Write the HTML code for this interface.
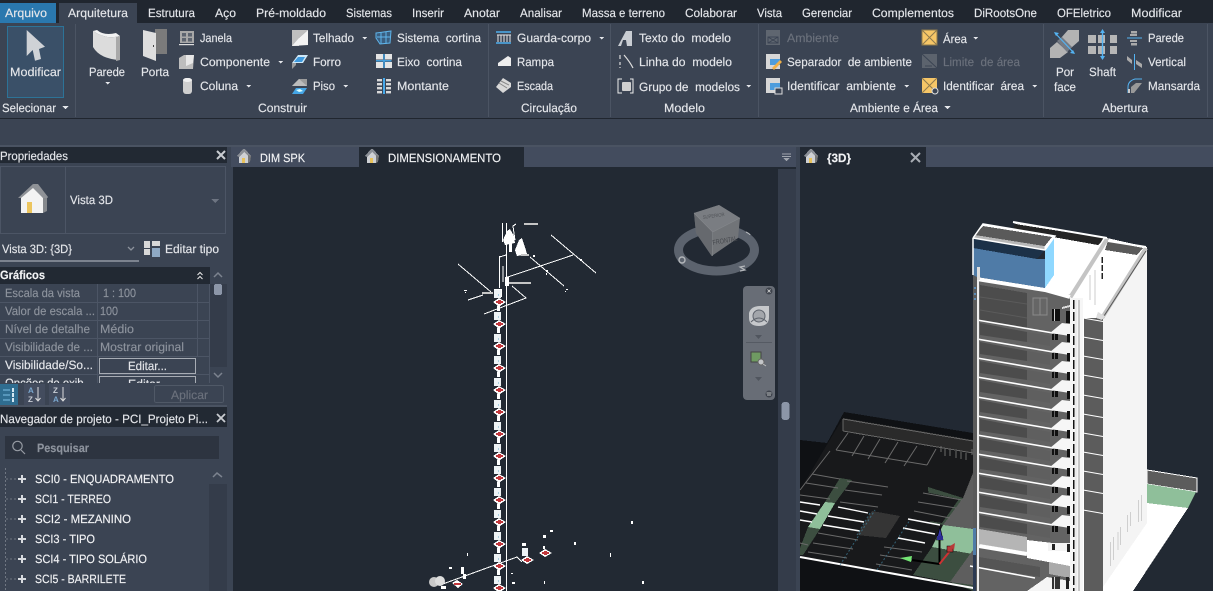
<!DOCTYPE html>
<html><head><meta charset="utf-8"><title>Revit</title>
<style>
html,body{margin:0;padding:0;background:#3b4453;width:1213px;height:591px;overflow:hidden}
svg{display:block}
text{font-family:"Liberation Sans",sans-serif;font-size:12px;fill:#e4e6ea;white-space:pre;stroke:#e4e6ea;stroke-width:.15px}
.g{fill:#6b717c;stroke:#6b717c}.p{fill:#8d939d;stroke:#8d939d}.w{fill:#f2f3f5;stroke:#f2f3f5}.b{font-weight:bold}
</style></head><body>
<svg width="1213" height="591" viewBox="0 0 1213 591" xmlns="http://www.w3.org/2000/svg" shape-rendering="crispEdges" text-rendering="geometricPrecision">
<defs>
<g id="fl">
<polygon points="980,3 1027,12 1027,22 980,15" fill="#4c4c4c"/>
<polygon points="1027,12 1050,16 1050,26 1027,22" fill="#5f5f5f"/>
<line x1="977" y1="0" x2="1053" y2="13" stroke="#fff" stroke-width="1.6"/>
<polygon points="1050,13 1062,3 1070,4 1070,16" fill="#f6f6f6"/>
<rect x="1052" y="14" width="2" height="6" fill="#111"/><rect x="1055" y="14" width="3" height="6" fill="#111"/><rect x="1067" y="14" width="3" height="8" fill="#111"/>
<line x1="1083" y1="-2" x2="1103" y2="1.5" stroke="#fff" stroke-width="1"/>
</g>
<g id="u">
<rect x="494" y="-12" width="7" height="8" fill="#eef3f6"/><rect x="498" y="-8" width="1" height="2" fill="#a9cfe0"/>
<polygon points="493,0 499,-4 506,0 500,4 498,4" fill="#fff"/>
<rect x="496" y="-1" width="7" height="2" fill="#c0373c"/><rect x="498" y="-2" width="3" height="4" fill="#c0373c"/>
<rect x="497" y="4" width="3" height="5" fill="#fff"/>
</g>
<g id="h"><polygon points="0,7 6,0 8,0 14,7 12,8 7,3 2,8" fill="#8b8f96"/><polygon points="2,8 7,3 11,7 11,14 2,14" fill="#cfd1d4"/><polygon points="11,6 14,7 13,13 11,14" fill="#777"/><rect x="5" y="9" width="3" height="5" fill="#e8c25c"/></g>
<g id="t"><polygon points="0,0 7,0 3.5,3"/></g>
<g id="tw"><polygon points="0,0 5,0 2.5,2.5"/></g>
</defs>

<rect width="1213" height="591" fill="#3b4453"/>
<!-- top tabs -->
<rect width="1213" height="23" fill="#20262f"/>
<rect x="0" y="3" width="56" height="20" fill="#2a78ae"/>
<rect x="59" y="3" width="78" height="20" fill="#3b4453"/>
<text x="5" y="17" textLength="42" lengthAdjust="spacingAndGlyphs">Arquivo</text>
<text x="68" y="17" textLength="60" lengthAdjust="spacingAndGlyphs">Arquitetura</text>
<text x="148" y="17" textLength="47" lengthAdjust="spacingAndGlyphs">Estrutura</text>
<text x="215" y="17" textLength="21" lengthAdjust="spacingAndGlyphs">Aço</text>
<text x="256" y="17" textLength="70" lengthAdjust="spacingAndGlyphs">Pré-moldado</text>
<text x="346" y="17" textLength="46" lengthAdjust="spacingAndGlyphs">Sistemas</text>
<text x="412" y="17" textLength="32" lengthAdjust="spacingAndGlyphs">Inserir</text>
<text x="464" y="17" textLength="36" lengthAdjust="spacingAndGlyphs">Anotar</text>
<text x="520" y="17" textLength="42" lengthAdjust="spacingAndGlyphs">Analisar</text>
<text x="582" y="17" textLength="83" lengthAdjust="spacingAndGlyphs">Massa e terreno</text>
<text x="685" y="17" textLength="52" lengthAdjust="spacingAndGlyphs">Colaborar</text>
<text x="757" y="17" textLength="25" lengthAdjust="spacingAndGlyphs">Vista</text>
<text x="802" y="17" textLength="50" lengthAdjust="spacingAndGlyphs">Gerenciar</text>
<text x="872" y="17" textLength="82" lengthAdjust="spacingAndGlyphs">Complementos</text>
<text x="974" y="17" textLength="63" lengthAdjust="spacingAndGlyphs">DiRootsOne</text>
<text x="1057" y="17" textLength="54" lengthAdjust="spacingAndGlyphs">OFEletrico</text>
<text x="1131" y="17" textLength="51" lengthAdjust="spacingAndGlyphs">Modificar</text>

<!-- ribbon -->
<rect x="0" y="118" width="1213" height="1" fill="#20262f"/>
<g fill="#4b5463">
<rect x="75" y="24" width="1" height="93"/><rect x="488" y="24" width="1" height="93"/><rect x="610" y="24" width="1" height="93"/><rect x="758" y="24" width="1" height="93"/><rect x="1043" y="24" width="1" height="93"/><rect x="1207" y="24" width="1" height="93"/>
</g>
<rect x="7.5" y="26.5" width="56" height="71" fill="#3a5068" stroke="#2d7397"/>
<g shape-rendering="auto">
<polygon points="26.7,30 45,46.7 39,49 41,59 35,60.7 32.7,50 26.7,56" fill="#cfd2d6"/>
<!-- parede -->
<path d="M93 31Q106 40 120 36V60Q100 59 93 47Z" fill="#dcdcdc"/><path d="M93 31Q106 40 120 36L116 33Q104 36 97 30Z" fill="#f2f2f2"/><path d="M116 37 120 36V60L116 61Z" fill="#a9a9a9"/>
<!-- porta -->
<rect x="155" y="29" width="12" height="25" fill="#7b7b7b"/><polygon points="143,30 156,33 156,61 143,56" fill="#dedede"/><rect x="153" y="45" width="1" height="2" fill="#444"/>
<!-- janela -->
<rect x="180" y="31" width="14" height="12" fill="#a8a8a8"/><g fill="#5e6570"><rect x="182" y="33" width="4" height="3.5"/><rect x="188" y="33" width="4" height="3.5"/><rect x="182" y="38" width="4" height="3.5"/><rect x="188" y="38" width="4" height="3.5"/></g><rect x="179" y="44" width="15" height="1.2" fill="#ddd"/>
<!-- componente -->
<polygon points="179,58 184,55 194,55 193,69 179,69" fill="#bdbdbd"/><polygon points="186,55 194,55 193,63 186,66" fill="#e7e7e7"/>
<!-- coluna -->
<rect x="183" y="78" width="9" height="16" rx="3" fill="#cfcfcf"/><ellipse cx="187.5" cy="80" rx="4.5" ry="2" fill="#f0f0f0"/>
<!-- telhado -->
<polygon points="292,30 308,30 299,38 299,46 292,46" fill="#bfbfbf"/><polygon points="308,30 308,45 292,46 299,38" fill="#f3f3f3"/>
<!-- forro -->
<polygon points="292,63 298,55 308,55 303,63" fill="#cfe8f7"/><polygon points="294,62 298,57 305,57 302,62" fill="#3f9ade"/><polygon points="292,63 296,63 296,65 292,69" fill="#999"/>
<!-- piso -->
<polygon points="292,86 299,79 307,79 307,86" fill="#9b9b9b"/><polygon points="292,86 307,86 299,79" fill="#bcbcbc"/><polygon points="292,94 296,88 307,88 303,94" fill="#45a6e6"/><polygon points="296,90 300,89 303,91 299,92" fill="#dff"/>
<!-- sistema cortina -->
<polygon points="376,33 391,31 390,43 380,44 376,38" fill="#3a5e80" stroke="#5fb4ea" stroke-width="1"/><path d="M381 32V44M386 32V44M377 37H390" stroke="#5fb4ea" fill="none"/>
<!-- eixo -->
<g fill="#e4e4e4"><rect x="376" y="54" width="7" height="5.5"/><rect x="385" y="54" width="7" height="5.5"/><rect x="376" y="62" width="7" height="6"/><rect x="385" y="62" width="7" height="6"/></g><path d="M376 60.8H391.5M384 54V68" stroke="#45a8ea" stroke-width="1.4"/>
<!-- montante -->
<g fill="#d8d8d8"><rect x="377" y="79" width="5" height="2.4"/><rect x="377" y="83" width="5" height="2.4"/><rect x="377" y="87" width="5" height="2.4"/><rect x="377" y="91" width="5" height="2.4"/><rect x="386" y="79" width="5" height="2.4"/><rect x="386" y="83" width="5" height="2.4"/><rect x="386" y="87" width="5" height="2.4"/><rect x="386" y="91" width="5" height="2.4"/></g><path d="M384 78V94" stroke="#45a8ea" stroke-width="2"/>
<!-- guarda-corpo -->
<path d="M496 32H511M496 43H511" stroke="#4eaeee" stroke-width="1.6" fill="none"/><path d="M497 35H511M498 35V42M501 35V42M504 35V42M507 35V42M510 35V42" stroke="#e8e8e8" fill="none"/>
<!-- rampa -->
<polygon points="498,63 508,56 511,58 511,66 498,66" fill="#ededed"/>
<!-- escada -->
<polygon points="496,87 503,78 511,83 511,87 503,93" fill="#d8d8d8"/><path d="M499 83 507 88M501 81 509 85" stroke="#888"/>
<!-- texto -->
<path d="M618 46 626 31H632V46H627L626 40H623L621 46Z" fill="#c9cdd3"/>
<!-- linha -->
<path d="M620 55V59M620 62V65M620 67V68M624 55Q630 62 633 68" stroke="#ddd" fill="none" stroke-width="1.2"/>
<!-- grupo -->
<path d="M622 79H618V93H622M630 79H633V93H630" stroke="#eee" fill="none"/><rect x="622" y="82" width="9" height="9" rx="1" fill="#d0d0d0"/>
<!-- ambiente icons -->
<rect x="766" y="30" width="14" height="15" fill="#5f6670"/><path d="M768 37H778V43H768ZM768 37 778 43M778 37 768 43" stroke="#3b4453" fill="none"/>
<rect x="766" y="54" width="14" height="15" fill="#d7d7d7"/><rect x="770" y="59" width="10" height="6" fill="#4d9cdc"/><polygon points="772,68 780,60 782,62 774,70" fill="#f0b048"/>
<rect x="766" y="78" width="14" height="15" fill="#d7d7d7"/><rect x="770" y="83" width="10" height="7" fill="#4d9cdc"/><rect x="775" y="88" width="7" height="6" fill="#3b4453" stroke="#ddd"/>
<!-- area -->
<rect x="922" y="30" width="15" height="15" fill="#f6c667"/><path d="M922 30 937 45M937 30 922 45" stroke="#8e7a4e"/><path d="M922 30H937V45H922Z" stroke="#8e7a4e" fill="none"/>
<rect x="922" y="54" width="15" height="14" fill="#5c636d"/><path d="M922 54 937 68M925 66H932" stroke="#3b4453"/>
<rect x="922" y="78" width="15" height="15" fill="#f6c667"/><path d="M922 78 937 93M937 78 922 93" stroke="#8e7a4e"/><circle cx="935" cy="91" r="3" fill="#3b4453" stroke="#ddd"/>
<!-- por face -->
<polygon points="1068,30 1079,30 1079,41 1071,48 1061,38" fill="#b3b3b3"/><polygon points="1050,48 1057,42 1068,52 1060,58 1050,58" fill="#b3b3b3"/><polygon points="1057,41 1062,37 1072,47 1067,52" fill="#757b85"/>
<path d="M1055 33 1074 53" stroke="#54b3f2" stroke-width="1.2"/><path d="M1054 32 1059 33 1056 36ZM1075 54 1070 53 1073 50Z" fill="#54b3f2"/>
<!-- shaft -->
<g fill="#b6b6b6"><rect x="1088" y="35" width="8" height="8"/><rect x="1098" y="35" width="7" height="8"/><rect x="1110" y="35" width="7" height="8"/><rect x="1088" y="46" width="8" height="8"/><rect x="1098" y="46" width="7" height="8"/><rect x="1110" y="46" width="7" height="8"/></g>
<path d="M1102.5 31V59" stroke="#54b3f2" stroke-width="1.4"/><path d="M1102.5 29 1105 33H1100ZM1102.5 60 1100 56H1105Z" fill="#54b3f2"/>
<!-- abertura -->
<g fill="#aaa"><rect x="1131" y="31" width="6" height="2.5"/><rect x="1130" y="34" width="7" height="2"/><rect x="1130" y="40" width="7" height="2"/><rect x="1131" y="43" width="6" height="2.5"/></g><path d="M1127 38H1142" stroke="#54b3f2"/>
<path d="M1127 56 1132 60V64L1127 60ZM1136 60 1142 64V68L1136 64Z" fill="#aaa"/><path d="M1134.500 54V70" stroke="#54b3f2"/>
<path d="M1128 93V87Q1128 81 1135 79H1142" stroke="#54b3f2" fill="none"/><polygon points="1131,93 1131,87 1136,83 1142,83 1134,93" fill="#999"/><rect x="1128" y="89" width="2" height="4" fill="#ccc"/>
</g>
<text x="10" y="76" textLength="51" lengthAdjust="spacingAndGlyphs">Modificar</text>
<text x="2" y="112" textLength="54" lengthAdjust="spacingAndGlyphs">Selecionar</text><use href="#t" x="62" y="106" fill="#e4e6ea"/>
<text x="89" y="76" textLength="36" lengthAdjust="spacingAndGlyphs">Parede</text><use href="#tw" x="105" y="82" fill="#e4e6ea"/>
<text x="141" y="76" textLength="28" lengthAdjust="spacingAndGlyphs">Porta</text>
<text x="200" y="42" textLength="32" lengthAdjust="spacingAndGlyphs">Janela</text>
<text x="200" y="66" textLength="70" lengthAdjust="spacingAndGlyphs">Componente</text><use href="#tw" x="278" y="61" fill="#e4e6ea"/>
<text x="200" y="90" textLength="38" lengthAdjust="spacingAndGlyphs">Coluna</text><use href="#tw" x="246" y="85" fill="#e4e6ea"/>
<text x="313" y="42" textLength="41" lengthAdjust="spacingAndGlyphs">Telhado</text><use href="#tw" x="362" y="37" fill="#e4e6ea"/>
<text x="313" y="66" textLength="28" lengthAdjust="spacingAndGlyphs">Forro</text>
<text x="313" y="90" textLength="22" lengthAdjust="spacingAndGlyphs">Piso</text><use href="#tw" x="343" y="85" fill="#e4e6ea"/>
<text x="397" y="42" textLength="84" lengthAdjust="spacingAndGlyphs">Sistema  cortina</text>
<text x="397" y="66" textLength="65" lengthAdjust="spacingAndGlyphs">Eixo  cortina</text>
<text x="397" y="90" textLength="52" lengthAdjust="spacingAndGlyphs">Montante</text>
<text x="258" y="112" textLength="49" lengthAdjust="spacingAndGlyphs">Construir</text>
<text x="517" y="42" textLength="74" lengthAdjust="spacingAndGlyphs">Guarda-corpo</text><use href="#tw" x="599" y="37" fill="#e4e6ea"/>
<text x="517" y="66" textLength="37" lengthAdjust="spacingAndGlyphs">Rampa</text>
<text x="517" y="90" textLength="36" lengthAdjust="spacingAndGlyphs">Escada</text>
<text x="521" y="112" textLength="56" lengthAdjust="spacingAndGlyphs">Circulação</text>
<text x="639" y="42" textLength="92" lengthAdjust="spacingAndGlyphs">Texto do  modelo</text>
<text x="639" y="66" textLength="93" lengthAdjust="spacingAndGlyphs">Linha do  modelo</text>
<text x="639" y="91" textLength="101" lengthAdjust="spacingAndGlyphs">Grupo de  modelos</text><use href="#tw" x="746" y="85" fill="#e4e6ea"/>
<text x="664" y="112" textLength="41" lengthAdjust="spacingAndGlyphs">Modelo</text>
<text x="787" y="42" textLength="52" lengthAdjust="spacingAndGlyphs" class="g">Ambiente</text>
<text x="787" y="66" textLength="125" lengthAdjust="spacingAndGlyphs">Separador  de ambiente</text>
<text x="787" y="90" textLength="109" lengthAdjust="spacingAndGlyphs">Identificar  ambiente</text><use href="#tw" x="904" y="85" fill="#e4e6ea"/>
<text x="943" y="43" textLength="24" lengthAdjust="spacingAndGlyphs">Área</text><use href="#tw" x="973" y="37" fill="#e4e6ea"/>
<text x="943" y="66" textLength="77" lengthAdjust="spacingAndGlyphs" class="g">Limite  de área</text>
<text x="943" y="90" textLength="81" lengthAdjust="spacingAndGlyphs">Identificar  área</text><use href="#tw" x="1032" y="85" fill="#e4e6ea"/>
<text x="850" y="112" textLength="88" lengthAdjust="spacingAndGlyphs">Ambiente e Área</text><use href="#t" x="944" y="106" fill="#e4e6ea"/>
<text x="1056" y="76" textLength="18" lengthAdjust="spacingAndGlyphs">Por</text>
<text x="1054" y="91" textLength="22" lengthAdjust="spacingAndGlyphs">face</text>
<text x="1089" y="76" textLength="27" lengthAdjust="spacingAndGlyphs">Shaft</text>
<text x="1148" y="42" textLength="36" lengthAdjust="spacingAndGlyphs">Parede</text>
<text x="1148" y="66" textLength="38" lengthAdjust="spacingAndGlyphs">Vertical</text>
<text x="1148" y="90" textLength="52" lengthAdjust="spacingAndGlyphs">Mansarda</text>
<text x="1102" y="112" textLength="46" lengthAdjust="spacingAndGlyphs">Abertura</text>

<!-- strip under ribbon -->
<rect x="0" y="145" width="1213" height="2" fill="#4a5362"/>

<!-- left view -->
<rect x="231" y="147" width="565" height="20" fill="#434c5e"/>
<rect x="359" y="147" width="165" height="20" fill="#222933"/>
<rect x="233" y="167" width="563" height="424" fill="#222933"/>
<rect x="778" y="169" width="18" height="422" fill="#343c4a"/>
<use href="#h" x="237" y="149"/><use href="#h" x="365" y="149"/>
<text x="260" y="162" textLength="45" lengthAdjust="spacingAndGlyphs" class="w">DIM SPK</text>
<text x="388" y="162" textLength="113" lengthAdjust="spacingAndGlyphs" class="w">DIMENSIONAMENTO</text>
<path d="M782 154H791M782 156.500H791" stroke="#a0a5ae"/><polygon points="783,158 790,158 786.500,161" fill="#a0a5ae"/>
<rect x="781.500" y="402" width="8" height="18" rx="3" fill="#8c96a8"/>

<!-- right view -->
<rect x="796" y="147" width="4" height="444" fill="#3b4453"/>
<rect x="800" y="147" width="126" height="20" fill="#222933"/>
<rect x="926" y="147" width="287" height="20" fill="#434c5e"/>
<rect x="800" y="167" width="413" height="424" fill="#222933"/>
<use href="#h" x="804" y="149"/>
<text x="827" y="162" textLength="24" lengthAdjust="spacingAndGlyphs" class="w b">{3D}</text>
<path d="M911 153 920 162M920 153 911 162" stroke="#a9adb4" stroke-width="2" shape-rendering="auto"/>

<!-- drawing left -->
<g shape-rendering="crispEdges" stroke="#fff" fill="none">
<path d="M506.500 223V591"/>
<path d="M551 235 596 273M530 257 564 286M458 264 491 292M505 278 573 255M468 300 483 295M484 314 526 298 512 286M502.500 223V242M499.500 256V288M499.500 257 506 255M516 224 513 226 515 240M503 266V282M440 585 517 557 522 562"/>
</g>
<g fill="#fff">
<polygon points="503,240 507,231 510,229 514,236 515,243 505,245"/>
<polygon points="515,250 519,240 522,238 525,247 527,254 517,256"/>
<rect x="509" y="243" width="3" height="9"/><rect x="505" y="277" width="4" height="9"/>
<rect x="494" y="289" width="8" height="8"/>
<rect x="464" y="290" width="3" height="1"/><rect x="465" y="292" width="1" height="1"/><rect x="566" y="289" width="2" height="1"/><rect x="565" y="291" width="1" height="1"/>
<rect x="533" y="255" width="2" height="2"/><rect x="546" y="270" width="2" height="2"/><rect x="580" y="259" width="2" height="2"/><rect x="546" y="273" width="1" height="2"/>
</g>
<g fill="#c5c5c5"><rect x="524" y="223" width="14" height="2"/><rect x="509" y="282" width="22" height="2"/><rect x="482" y="292" width="11" height="2"/><rect x="521" y="254" width="8" height="2"/></g>
<use href="#u" x="0" y="302"/><use href="#u" x="0" y="324"/><use href="#u" x="0" y="346"/><use href="#u" x="0" y="368"/><use href="#u" x="0" y="390"/><use href="#u" x="0" y="412"/><use href="#u" x="0" y="434"/><use href="#u" x="0" y="456"/><use href="#u" x="0" y="478"/><use href="#u" x="0" y="500"/><use href="#u" x="0" y="522"/><use href="#u" x="0" y="544"/><use href="#u" x="0" y="566"/><use href="#u" x="0" y="588"/>
<!-- lower scatter -->
<rect x="522" y="548" width="6" height="8" fill="#eef3f6"/><rect x="522" y="543" width="4" height="3" fill="#fff"/>
<polygon points="521,560 527,556 534,560 527,564" fill="#fff"/><rect x="524" y="559" width="7" height="2" fill="#c0373c"/><rect x="526" y="558" width="3" height="4" fill="#c0373c"/>
<polygon points="539,553 545,549 552,553 545,557" fill="#fff"/><rect x="542" y="552" width="7" height="2" fill="#c0373c"/><rect x="544" y="551" width="3" height="4" fill="#c0373c"/><rect x="543" y="546" width="2" height="3" fill="#fff"/>
<polygon points="452,583 457,580 463,584 458,588" fill="#fff"/><rect x="454" y="583" width="7" height="2" fill="#c0373c"/>
<g fill="#fff"><rect x="543" y="535" width="3" height="3"/><rect x="550" y="530" width="3" height="2"/><rect x="574" y="542" width="2" height="3"/><rect x="610" y="553" width="1" height="4"/><rect x="631" y="521" width="2" height="3"/><rect x="467" y="553" width="1" height="3"/><rect x="449" y="567" width="3" height="2"/><rect x="511" y="573" width="2" height="1"/><rect x="512" y="582" width="3" height="2"/><rect x="544" y="581" width="1" height="3"/><rect x="642" y="581" width="2" height="3"/><rect x="461" y="567" width="3" height="7"/><rect x="463" y="574" width="3" height="5"/><rect x="441" y="586" width="5" height="3"/></g>
<circle cx="434" cy="582" r="5" fill="#c9c9c9" shape-rendering="auto"/><circle cx="440" cy="581" r="5" fill="#ddd" shape-rendering="auto"/>

<!-- viewcube -->
<g shape-rendering="auto">
<ellipse cx="716.500" cy="250" rx="38" ry="21" fill="none" stroke="#5c636e" stroke-width="9"/>
<polygon points="719,205 694,213 696,233 711.700,256 738,238 740,218" fill="#717478"/>
<polygon points="694,213 719,205 740,218 712.700,232" fill="#7a7d82"/>
<polygon points="694,213 712.700,232 711.700,256 696,233" fill="#66696e"/>
<path d="M694 213 712.700 232 740 218M712.700 232V256" stroke="#85888c" fill="none" stroke-width=".6"/>
<text x="713" y="245" style="font-size:7px;fill:#44474c;stroke:none" textLength="25" lengthAdjust="spacingAndGlyphs" transform="rotate(-10 713 245)">FRONTAL</text>
<text x="703" y="219" style="font-size:5px;fill:#505358;stroke:none" textLength="22" lengthAdjust="spacingAndGlyphs" transform="rotate(-8 703 219)">SUPERIOR</text>
<circle cx="682" cy="260" r="3" fill="none" stroke="#b4b7bb" stroke-width="1.4"/>
<path d="M745 266 740 267 745 270 740 271M746 232Q750 234 750 235" stroke="#b4b7bb" fill="none" stroke-width="1.2"/>
<!-- navbar -->
<rect x="743" y="286" width="32" height="114" rx="4" fill="#686d76"/>
<circle cx="769" cy="291" r="3.500" fill="#3f444d"/><path d="M767.500 289.500 770.500 292.500M770.500 289.500 767.500 292.500" stroke="#ddd" stroke-width=".8"/>
<path d="M749 313Q751 306 760 306H769V317Q769 326 759 326 749 326 749 318Z" fill="#c6c8cb"/><circle cx="759" cy="316" r="6" fill="#a3a6ab" stroke="#5e636c"/><path d="M751 322Q759 314 767 322" stroke="#5e636c" fill="none"/>
<polygon points="755,335 762,335 758.500,339" fill="#50555e"/>
<rect x="746" y="342" width="26" height="1" fill="#555a63"/>
<rect x="751" y="352" width="10" height="10" fill="#6f9a62" stroke="#444"/>
<circle cx="761" cy="362" r="3" fill="#c4c6c9" stroke="#666"/><path d="M763 364 766 366" stroke="#bbb"/>
<polygon points="755,377 762,377 758.500,381" fill="#50555e"/>
<circle cx="769" cy="394" r="3.500" fill="#3f444d"/><path d="M766.500 393H771.500M767 395H771" stroke="#ddd" stroke-width=".8"/>
</g>

<!-- PARKING -->
<polygon points="800,440 827,443 844,412 973,433 973,591 800,591" fill="#0f1114"/>
<polygon points="843,418 973,440 973,591 990,591 800,557 800,490" fill="#18191b"/>
<polygon points="843,418 973,440 973,453 843,431" fill="#2a2a2a"/>
<path d="M843 419 973 441M843 431 973 453M843 419V431" stroke="#666" fill="none"/>
<polygon points="840,478 852,480 835,503 825,502" fill="#3c4e40"/>
<polygon points="825,502 835,503 820,529 808,527" fill="#8fbf9a"/>
<polygon points="808,527 820,529 803,555 800,555 800,548" fill="#3c4e40"/>
<polygon points="872,511 900,516 886,538 857,535" fill="#353535"/>
<polygon points="928,487 963,498 943,525 973,530 973,591 950,582 913,575 932,547" fill="#3c4e40"/>
<polygon points="925,492 959,499 942,523 910,518" fill="#18191b"/>
<polygon points="907,518 943,525 932,547 893,538" fill="#18191b"/>
<polygon points="883,547 927,545 913,575 875,568" fill="#18191b"/>
<polygon points="943,525 973,529 973,554 932,547" fill="#8fbf9a"/>
<polygon points="943,525 963,498 973,473 973,529" fill="#5e5e5e"/>
<polygon points="950,582 973,550 973,585" fill="#5e5e5e"/>
<g stroke="#6a6a6a" fill="none" shape-rendering="auto">
<path d="M848 433 836 450M864 436 852 456M880 439 868 459M898 442 885 463M917 446 904 466M936 449 927 465M836 450 927 465"/>
<path d="M830 451 800 490"/>
<path d="M812 474 840 479M847 481 888 487M806 483 838 488M845 490 882 495M800 495 830 499M840 502 878 507M923 493 962 500M918 502 956 508M914 511 950 518"/>
<path d="M818 533 858 540M813 543 853 549M808 552 847 558M800 543 808 545M884 547 922 552M880 555 918 561M876 564 912 570"/>
<path d="M972 449 972 455M941 446V452M945 448V456M950 449V456M956 451V458M961 452V459M966 453V460"/>
</g>
<g stroke="#fff" fill="none" stroke-width="1.400" shape-rendering="auto">
<path d="M800 502 820 505M800 511 817 514M800 520 812 522M838 507 868 513M828 516 864 522M823 525 860 531M908 519 940 525M903 528 935 534M898 538 925 543"/>
<path d="M800 557 990 591" stroke-width="2"/>
</g>
<path d="M870 513 857 535M840 565 875 510M877 570 910 520" stroke="#3f7f9a" stroke-dasharray="2 2" fill="none" shape-rendering="auto" opacity=".7"/>
<!-- gizmo -->
<g shape-rendering="auto">
<path d="M939.500 564V540" stroke="#000" stroke-width="2"/>
<polygon points="940,527 943,540 943,540 936.500,540" fill="#3434a8" stroke="#000" stroke-width=".6"/><rect x="937" y="536" width="6" height="4" fill="#2c2c90"/>
<path d="M939.500 564 912 560" stroke="#000" stroke-width="2"/>
<polygon points="900,558 912,556 911,562" fill="#74e674"/>
<path d="M939.500 564 950 551" stroke="#c33" stroke-width="2"/>
<rect x="947" y="546" width="6" height="6" fill="#b83a3a" stroke="#000" stroke-width=".5"/><polygon points="950,546 955,543 954,550" fill="#b83a3a"/>
</g>

<!-- GROUND right -->
<polygon points="1147,470 1197,478 1197,492 1147,484" fill="#5c5c5c" stroke="#fff"/>
<polygon points="1147,484 1196,492 1188,508 1147,503" fill="#8fbf9a"/>
<polygon points="1147,503 1188,508 1133,591 1100,591" fill="#fff"/>

<!-- BUILDING -->
<polygon points="1013,223 1107,238 1147,247 1147,251 1103,318 1070,320 1045,288 1054,235" fill="#fff"/>
<polygon points="1147,247 1147,523 1103,587 1103,318" fill="#f4f4f4"/>
<polygon points="1015,224 1105,238 1098,245 1013,230" fill="#242424"/>
<polygon points="1108,241 1143,248 1137,255 1105,250" fill="#5a5a5a"/>
<g shape-rendering="auto">
<path d="M1107 238 1070 297" stroke="#c4c4c4" stroke-width="5" fill="none"/><path d="M1105 237 1069 294" stroke="#fff" stroke-width="1.500" fill="none"/>
<path d="M1146 248 1102 318" stroke="#c4c4c4" stroke-width="4" fill="none"/><path d="M1146 251 1104 316" stroke="#555" stroke-width="1" fill="none"/>
<path d="M1013 222 1107 238M1108 241 1146 247" stroke="#fff" stroke-width="2" fill="none"/>
</g>
<path d="M1102 257V280" stroke="#222" stroke-dasharray="6 2" stroke-width="1.500"/>
<path d="M1090 275V300M1095 270V305" stroke="#ccc" fill="none"/>
<path d="M1083 320 1103 318" stroke="#ccc" fill="none"/>
<rect x="1083" y="318" width="20" height="273" fill="#5c5c5c"/>
<polygon points="1098,312 1105,316 1102,320 1096,318" fill="#ddd"/>
<!-- facade -->
<polygon points="977,278 1045,288 1070,297 1070,591 977,591" fill="#636363"/>
<polygon points="980,285 1027,293 1027,328 980,320" fill="#4c4c4c"/>
<path d="M980 297 1027 304M980 310 1027 318" stroke="#5b5b5b" fill="none" shape-rendering="auto"/>
<rect x="1033" y="298" width="14" height="17" fill="#666" stroke="#8a8a8a"/><path d="M1040 298V315" stroke="#8a8a8a"/>
<rect x="1052" y="309" width="8" height="12" fill="#111"/><rect x="1054" y="309" width="1" height="12" fill="#ccc"/><rect x="1066" y="311" width="4" height="12" fill="#111"/>
<path d="M1062 308 1070 306" stroke="#ddd" stroke-width="2"/>
<path d="M977 279 1045 290 1070 297" stroke="#fff" stroke-width="4" fill="none" shape-rendering="auto"/>
<g shape-rendering="auto">
<use href="#fl" x="0" y="320"/><use href="#fl" x="0" y="339"/><use href="#fl" x="0" y="358"/><use href="#fl" x="0" y="377"/><use href="#fl" x="0" y="397"/><use href="#fl" x="0" y="416"/><use href="#fl" x="0" y="435"/><use href="#fl" x="0" y="454"/><use href="#fl" x="0" y="473"/><use href="#fl" x="0" y="492"/><use href="#fl" x="0" y="512"/>
</g>
<!-- lower floors -->
<polygon points="979,529 1027,537 1027,552 979,544" fill="#b5b5b5"/>
<polygon points="1027,540 1070,545 1070,566 1027,558" fill="#fff"/>
<rect x="1048" y="543" width="22" height="8" fill="#f4f4f4"/><rect x="1052" y="544" width="3" height="6" fill="#222"/><rect x="1067" y="544" width="3" height="8" fill="#222"/>
<path d="M979 546 1027 554" stroke="#fff" stroke-width="4" shape-rendering="auto"/>
<polygon points="979,557 1040,567 1040,577 979,567" fill="#555"/>
<polygon points="1049,562 1070,566 1070,578 1049,574" fill="#aaa"/>
<path d="M970 566 1035 578" stroke="#fff" stroke-width="1.500" shape-rendering="auto"/>
<polygon points="1027,591 1047,577 1070,581 1070,591" fill="#f5f5f5"/><rect x="1052" y="577" width="8" height="12" fill="#333"/><rect x="1054" y="577" width="1" height="12" fill="#ddd"/><rect x="1066" y="577" width="3" height="12" fill="#222"/>
<!-- tower stripes -->
<rect x="1070" y="298" width="13" height="293" fill="#f6f6f6"/>
<path d="M1073.500 300V591" stroke="#111" stroke-width="1.500" stroke-dasharray="9 3"/>
<path d="M1079 300V591" stroke="#9a9a9a"/><path d="M1076 300V591" stroke="#e2e2e2"/>
<path d="M1083.500 318V591" stroke="#fff"/>
<!-- left edge -->
<rect x="973" y="275" width="4" height="316" fill="#5a5a5a"/>
<rect x="977" y="268" width="2" height="323" fill="#eee"/>
<rect x="973" y="528" width="3" height="27" fill="#4f7ba7"/><rect x="973" y="555" width="3" height="36" fill="#2c3a52"/>
<g fill="#5b8bb6"><rect x="974" y="287" width="2" height="2"/><rect x="974" y="293" width="2" height="2"/><rect x="974" y="298" width="2" height="2"/></g>
<!-- roof box -->
<polygon points="973,238 983,224 1055,236 1045,250" fill="#fff"/>
<polygon points="983,226 1052,237 1044,247 974,236" fill="#5a5a5a"/>
<polygon points="975,235 1044,246 1045,250 973,238" fill="#b8b8b8"/>
<polygon points="973,238 1045,250 1037,259 973,248" fill="#1c3148"/>
<polygon points="973,248 1037,259 1045,259 1045,288 977,277 973,275" fill="#4f7ba7"/>
<polygon points="1045,250 1054,238 1054,275 1045,288" fill="#8fd8ff"/>
<path d="M973 238 1045 250M973 238V275M973 238 983,224 1055,236 1045,250" stroke="#fff" stroke-width="1.500" fill="none" shape-rendering="auto"/>
<rect x="977" y="267" width="3" height="13" fill="#ddd"/>
<g stroke="#cfcfcf" fill="none"><path d="M1141.500 495V521M1138.500 500V522M1130.500 512V526M1127.500 515V532M1120.500 527V545M1118 532V550M1113.500 537V560M1110.500 542V566"/></g>

<!-- PROPERTIES PANEL -->
<rect x="0" y="147" width="227" height="16" fill="#222933"/>
<text x="0" y="160" textLength="68" lengthAdjust="spacingAndGlyphs">Propriedades</text>
<path d="M217 151 225 159M225 151 217 159" stroke="#c9ccd1" stroke-width="2" shape-rendering="auto"/>
<rect x="0.500" y="166.500" width="225" height="67" fill="none" stroke="#4c5565"/>
<rect x="0.500" y="166.500" width="65" height="67" fill="none" stroke="#4c5565"/>
<g shape-rendering="auto"><polygon points="33,184 48,198 43,198 33,189 22,198 18,198" fill="#8f9297"/><polygon points="33,184 38,184 48,197 44,199" fill="#8f9297"/><polygon points="21,198 33,188 43,198 43,213 21,213" fill="#f3f3f3"/><polygon points="43,198 47,198 47,211 43,213" fill="#85888c"/><rect x="27" y="202" width="5" height="11" fill="#ecc55e"/></g>
<text x="70" y="204" textLength="43" lengthAdjust="spacingAndGlyphs">Vista 3D</text>
<polygon points="211,199 219,199 215,203" fill="#6d7481"/>
<text x="2" y="253" textLength="70" lengthAdjust="spacingAndGlyphs">Vista 3D: {3D}</text>
<path d="M128 247 131 250 134 247" stroke="#8c929c" fill="none" stroke-width="1.300" shape-rendering="auto"/>
<rect x="0" y="260" width="139" height="2" fill="#7c838f"/>
<g fill="#d8d8d8"><rect x="144" y="241" width="6" height="7"/><rect x="152" y="241" width="8" height="5"/><rect x="144" y="249" width="6" height="6"/><rect x="152" y="248" width="8" height="9" fill="#8fa9c4"/></g>
<text x="165" y="253" textLength="54" lengthAdjust="spacingAndGlyphs">Editar tipo</text>
<rect x="0" y="267" width="210" height="17" fill="#222933"/>
<text x="0" y="279" textLength="45" lengthAdjust="spacingAndGlyphs" class="w b">Gráficos</text>
<path d="M197.500 275 200 272.500 202.500 275M197.500 279 200 276.500 202.500 279" stroke="#e8e8e8" fill="none" shape-rendering="auto"/>
<rect x="210" y="267" width="17" height="116" fill="#343c4a"/>
<rect x="210" y="267" width="17" height="17" fill="#3b4453"/>
<path d="M214 277 218 273 222 277" stroke="#7c838f" stroke-width="1.500" fill="none" shape-rendering="auto"/>
<rect x="214" y="284" width="8" height="11" rx="2" fill="#8c96a8"/>
<rect x="210" y="367" width="17" height="16" fill="#3b4453"/>
<path d="M214 373 218 377 222 373" stroke="#7c838f" stroke-width="1.500" fill="none" shape-rendering="auto"/>
<rect x="0" y="284" width="209" height="99" fill="#3b4453"/>
<g fill="#4c5565"><rect x="0" y="302" width="209" height="1"/><rect x="0" y="320" width="209" height="1"/><rect x="0" y="338" width="209" height="1"/><rect x="0" y="356" width="209" height="1"/><rect x="0" y="374" width="209" height="1"/><rect x="97" y="284" width="1" height="99"/><rect x="197" y="284" width="1" height="72"/><rect x="209" y="284" width="1" height="99"/></g>
<text x="5" y="297" textLength="75" lengthAdjust="spacingAndGlyphs" class="p">Escala da vista</text>
<text x="5" y="315" textLength="90" lengthAdjust="spacingAndGlyphs" class="p">Valor de escala ...</text>
<text x="5" y="333" textLength="85" lengthAdjust="spacingAndGlyphs" class="p">Nível de detalhe</text>
<text x="5" y="351" textLength="88" lengthAdjust="spacingAndGlyphs" class="p">Visibilidade de ...</text>
<text x="5" y="369" textLength="88" lengthAdjust="spacingAndGlyphs">Visibilidade/So...</text>
<text x="103" y="297" textLength="33" lengthAdjust="spacingAndGlyphs" class="p">1 : 100</text>
<text x="100" y="315" textLength="18" lengthAdjust="spacingAndGlyphs" class="p">100</text>
<text x="100" y="333" textLength="34" lengthAdjust="spacingAndGlyphs" class="p">Médio</text>
<text x="100" y="351" textLength="84" lengthAdjust="spacingAndGlyphs" class="p">Mostrar original</text>
<rect x="99.500" y="358.500" width="96" height="15" fill="#3b4453" stroke="#a7acb4"/>
<text x="128" y="370" textLength="39" lengthAdjust="spacingAndGlyphs">Editar...</text>
<text x="5" y="387" textLength="88" lengthAdjust="spacingAndGlyphs">Opções de exib...</text>
<rect x="99.500" y="376.500" width="96" height="15" fill="#3b4453" stroke="#a7acb4"/>
<text x="128" y="388" textLength="32" lengthAdjust="spacingAndGlyphs">Editar</text>
<!-- prop toolbar -->
<rect x="0" y="383" width="227" height="25" fill="#3b4453"/>
<rect x="0" y="384" width="18" height="22" fill="#2f6d90"/>
<path d="M3 390H10M3 395H10M3 400H10" stroke="#7cc0e4"/><path d="M13 388V392M13 393V397M13 398V402" stroke="#d5e8f2" stroke-width="2"/>
<rect x="24" y="384" width="21" height="21" fill="#434c5e"/><rect x="49" y="384" width="21" height="21" fill="#434c5e"/>
<text x="28" y="393" style="font-size:8px;fill:#7aa7cf;stroke:none" class="b">A</text><text x="28" y="402" style="font-size:8px;fill:#c9ced6;stroke:none" class="b">Z</text>
<path d="M38 387V400M35.500 398 38 401 40.500 398" stroke="#ddd" fill="none" shape-rendering="auto"/>
<text x="53" y="393" style="font-size:8px;fill:#c9ced6;stroke:none" class="b">Z</text><text x="53" y="402" style="font-size:8px;fill:#7aa7cf;stroke:none" class="b">A</text>
<path d="M63 387V400M60.500 398 63 401 65.500 398" stroke="#ddd" fill="none" shape-rendering="auto"/>
<rect x="154.500" y="385.500" width="69" height="17" rx="2" fill="none" stroke="#505967"/>
<text x="171" y="399" textLength="37" lengthAdjust="spacingAndGlyphs" class="g">Aplicar</text>

<!-- NAVIGATOR -->
<rect x="0" y="405" width="227" height="2" fill="#4a5362"/>
<rect x="0" y="407" width="227" height="20" fill="#222933"/>
<text x="0" y="423" textLength="208" lengthAdjust="spacingAndGlyphs">Navegador de projeto - PCI_Projeto Pi...</text>
<path d="M217 414 225 422M225 414 217 422" stroke="#c9ccd1" stroke-width="1.800" shape-rendering="auto"/>
<rect x="5" y="436" width="214" height="23" fill="#2d3440"/>
<circle cx="17.500" cy="446" r="4.700" fill="none" stroke="#969ba3" stroke-width="1.200" shape-rendering="auto"/><path d="M21 450 25 454" stroke="#969ba3" stroke-width="1.200" shape-rendering="auto"/>
<text x="37" y="452" textLength="52" lengthAdjust="spacingAndGlyphs" class="p b">Pesquisar</text>
<rect x="209" y="467" width="18" height="124" fill="#343c4a"/>
<rect x="209" y="467" width="18" height="17" fill="#3b4453"/>
<path d="M213 477 217 473 222 477" stroke="#7c838f" stroke-width="1.500" fill="none" shape-rendering="auto"/>
<path d="M5.500 468V591" stroke="#6f7682" stroke-dasharray="2 2"/>
<path d="M6 479H16M6 499H16M6 519H16M6 539H16M6 559H16M6 579H16" stroke="#6f7682" stroke-dasharray="2 2"/>
<g fill="#d8dbe0"><rect x="18" y="478" width="8" height="2"/><rect x="21" y="475" width="2" height="8"/><rect x="18" y="498" width="8" height="2"/><rect x="21" y="495" width="2" height="8"/><rect x="18" y="518" width="8" height="2"/><rect x="21" y="515" width="2" height="8"/><rect x="18" y="538" width="8" height="2"/><rect x="21" y="535" width="2" height="8"/><rect x="18" y="558" width="8" height="2"/><rect x="21" y="555" width="2" height="8"/><rect x="18" y="578" width="8" height="2"/><rect x="21" y="575" width="2" height="8"/></g>
<text x="35" y="483" textLength="139" lengthAdjust="spacingAndGlyphs" class="w">SCI0 - ENQUADRAMENTO</text>
<text x="35" y="503" textLength="76" lengthAdjust="spacingAndGlyphs" class="w">SCI1 - TERREO</text>
<text x="35" y="523" textLength="96" lengthAdjust="spacingAndGlyphs" class="w">SCI2 - MEZANINO</text>
<text x="35" y="543" textLength="60" lengthAdjust="spacingAndGlyphs" class="w">SCI3 - TIPO</text>
<text x="35" y="563" textLength="112" lengthAdjust="spacingAndGlyphs" class="w">SCI4 - TIPO SOLÁRIO</text>
<text x="35" y="583" textLength="91" lengthAdjust="spacingAndGlyphs" class="w">SCI5 - BARRILETE</text>
</svg>
</body></html>
